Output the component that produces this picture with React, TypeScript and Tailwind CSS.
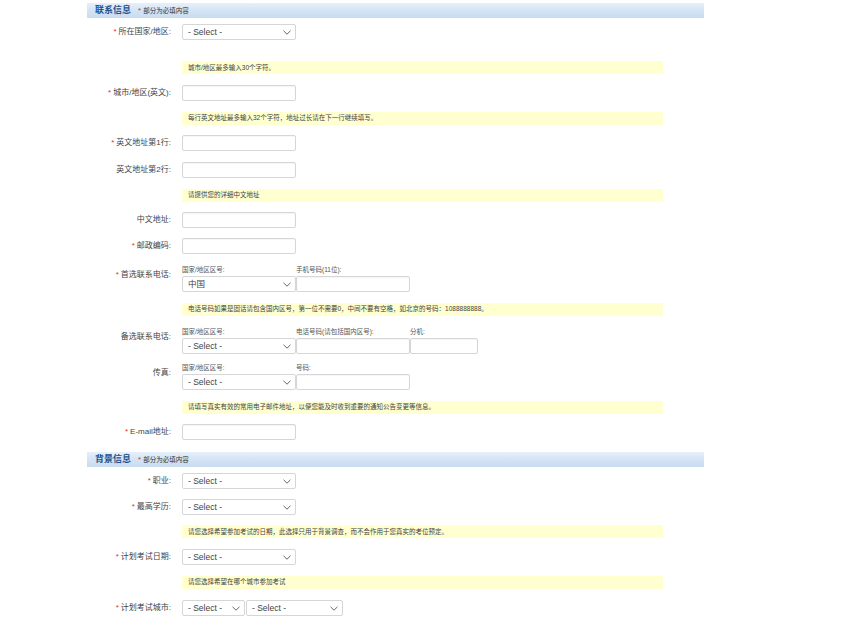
import { ReactNode } from 'react';

const FONT = "font-['Liberation_Sans','Noto_Sans_CJK_SC',sans-serif]";

const Chevron = () => (
  <svg width="8" height="5" viewBox="0 0 8 5" fill="none" className="shrink-0">
    <path d="M0.5 0.8 L4 4.2 L7.5 0.8" stroke="#555" strokeWidth="0.9" />
  </svg>
);

const Select = ({ value = '- Select -', w = 'w-[114px]' }: { value?: string; w?: string }) => (
  <div
    className={`${w} h-4 shrink-0 bg-white border border-[#d6d6d6] rounded-[2px] flex items-center justify-between pl-[5px] pr-[4px] text-[8.5px] text-[#444]`}
  >
    <span>{value}</span>
    <Chevron />
  </div>
);

const Input = ({ w = 'w-[114px]' }: { w?: string }) => (
  <div className={`${w} h-4 shrink-0 bg-white border border-[#d6d6d6] rounded-[2px] shadow-[inset_0_1px_1px_rgba(0,0,0,0.04)]`} />
);

const Label = ({ text, req }: { text: string; req?: boolean }) => (
  <div className="w-[95px] shrink-0 pr-[11px] text-right text-[8px] text-[#444]">
    {req && <span className="text-[#e0312f] mr-[2px]">*</span>}
    {text}
  </div>
);

const Row = ({ h, label, req, children }: { h: string; label: string; req?: boolean; children: ReactNode }) => (
  <div className={`${h} flex items-center`}>
    <Label text={label} req={req} />
    <div className="flex">{children}</div>
  </div>
);

const Note = ({ h, text }: { h: string; text: string }) => (
  <div className={`${h} flex items-center`}>
    <div className="w-[95px] shrink-0" />
    <div className="w-[481px] h-[13px] bg-[#ffffd0] flex items-center pl-[6px] text-[6.5px] text-[#444]">{text}</div>
  </div>
);

const Header = ({ title, mt }: { title: string; mt: string }) => (
  <div
    className={`${mt} h-[15px] w-[617px] flex items-center pl-2 bg-gradient-to-b from-[#e6f0fa] via-[#d3e4f4] to-[#c9dcef]`}
  >
    <span className="text-[9px] font-bold text-[#22528f]">{title}</span>
    <span className="ml-[7px] text-[#e0312f] text-[8px]">*</span>
    <span className="ml-[2px] text-[6.5px] text-[#333]">部分为必填内容</span>
  </div>
);

const Phone = ({
  h,
  label,
  req,
  cols,
}: {
  h: string;
  label: string;
  req?: boolean;
  cols: { sub: string; el: ReactNode }[];
}) => (
  <div className={`${h} flex`}>
    <div className="pt-[10px]">
      <Label text={label} req={req} />
    </div>
    <div className="flex pt-[6px]">
      {cols.map((c, i) => (
        <div key={i} className="flex flex-col">
          <div className="h-[10px] flex items-center text-[6.5px] text-[#555]">{c.sub}</div>
          <div className="mt-[1px]">{c.el}</div>
        </div>
      ))}
    </div>
  </div>
);

export default function App() {
  return (
    <div className={`${FONT} w-[865px] h-[623px] bg-white overflow-hidden`}>
      <div className="ml-[87px] pt-[1px] flex flex-col">
        <Header title="联系信息" mt="mt-[2px]" />
        <Row h="h-[28px]" label="所在国家/地区:" req>
          <Select />
        </Row>
        <div className="h-[9px]" />
        <Note h="h-[25px]" text="城市/地区最多输入30个字符。" />
        <Row h="h-[26px]" label="城市/地区(英文):" req>
          <Input />
        </Row>
        <Note h="h-[24px]" text="每行英文地址最多输入32个字符，地址过长请在下一行继续填写。" />
        <Row h="h-[26px]" label="英文地址第1行:" req>
          <Input />
        </Row>
        <Row h="h-[27px]" label="英文地址第2行:">
          <Input />
        </Row>
        <Note h="h-[24px]" text="请提供您的详细中文地址" />
        <Row h="h-[26px]" label="中文地址:">
          <Input />
        </Row>
        <Row h="h-[26px]" label="邮政编码:" req>
          <Input />
        </Row>
        <Phone
          h="h-[38px]"
          label="首选联系电话:"
          req
          cols={[
            { sub: '国家/地区区号:', el: <Select value="中国" /> },
            { sub: '手机号码(11位):', el: <Input /> },
          ]}
        />
        <Note h="h-[24px]" text="电话号码如果是固话请包含国内区号，第一位不需要0，中间不要有空格，如北京的号码：1088888888。" />
        <Phone
          h="h-[36px]"
          label="备选联系电话:"
          cols={[
            { sub: '国家/地区区号:', el: <Select /> },
            { sub: '电话号码(请包括国内区号):', el: <Input /> },
            { sub: '分机:', el: <Input w="w-[68px]" /> },
          ]}
        />
        <Phone
          h="h-[38px]"
          label="传真:"
          cols={[
            { sub: '国家/地区区号:', el: <Select /> },
            { sub: '号码:', el: <Input /> },
          ]}
        />
        <Note h="h-[24px]" text="请填写真实有效的常用电子邮件地址，以便您能及时收到重要的通知公告变更等信息。" />
        <Row h="h-[26px]" label="E-mail地址:" req>
          <Input />
        </Row>
        <Header title="背景信息" mt="mt-[7px]" />
        <Row h="h-[28px]" label="职业:" req>
          <Select />
        </Row>
        <Row h="h-[24px]" label="最高学历:" req>
          <Select />
        </Row>
        <Note h="h-[25px]" text="请您选择希望参加考试的日期，此选择只用于背景调查，而不会作用于您真实的考位预定。" />
        <Row h="h-[26px]" label="计划考试日期:" req>
          <Select />
        </Row>
        <Note h="h-[24px]" text="请您选择希望在哪个城市参加考试" />
        <Row h="h-[28px]" label="计划考试城市:" req>
          <Select w="w-[63px]" />
          <div className="w-px" />
          <Select w="w-[97px]" />
        </Row>
      </div>
    </div>
  );
}
